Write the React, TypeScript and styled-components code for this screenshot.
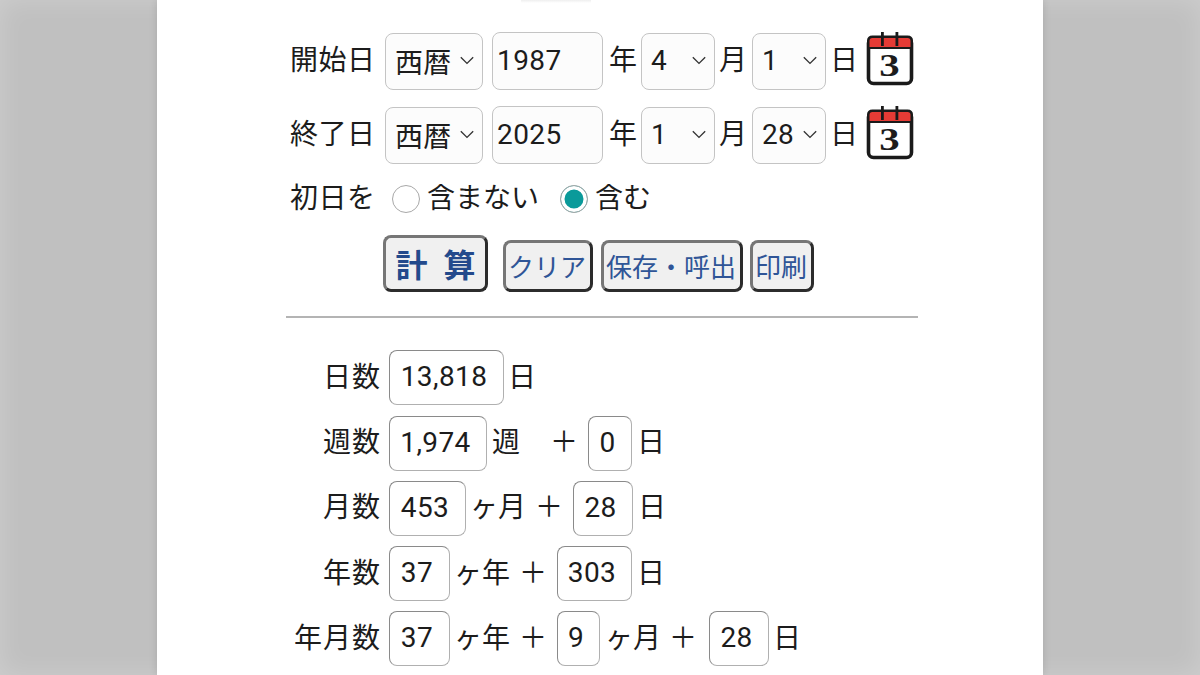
import React from "react";
import styled, { createGlobalStyle } from "styled-components";

const FONT = `Roboto, "Noto Sans CJK JP", sans-serif`;

const GlobalStyle = createGlobalStyle`
  html, body {
    margin: 0;
    padding: 0;
    background: #c0c0c0;
    overflow: hidden;
  }
  * {
    box-sizing: border-box;
  }
`;

function Chevron() {
  return (
    <ChevronIcon viewBox="0 0 14 8" aria-hidden="true">
      <path d="M1.5 1.2 L7 6.6 L12.5 1.2" fill="none" stroke="#333" strokeWidth="1.2" />
    </ChevronIcon>
  );
}

function CalendarIcon() {
  return (
    <CalendarSvg viewBox="0 0 48 54" aria-hidden="true">
      <rect x="2.5" y="6" width="43" height="45.5" rx="5" fill="#fff" stroke="#1a1a1a" strokeWidth="3.6" />
      <path d="M1 17 V9 Q1 3.5 6.5 3.5 H41.5 Q47 3.5 47 9 V17 Z" fill="#1a1a1a" />
      <path d="M3.5 15 V9 Q3.5 6 6.5 6 H41.5 Q44.5 6 44.5 9 V15 Z" fill="#e53b35" />
      <rect x="15" y="0" width="2.8" height="14" fill="#1a1a1a" />
      <rect x="29.5" y="0" width="2.8" height="14" fill="#1a1a1a" />
      <CalendarDigit transform="translate(23.5 44) scale(1.2 0.95)" textAnchor="middle">
        3
      </CalendarDigit>
    </CalendarSvg>
  );
}

type DateRowProps = {
  label: string;
  year: string;
  month: string;
  day: string;
};

function DateRow(props: DateRowProps) {
  const { label, year, month, day } = props;

  return (
    <FormRow>
      <RowLabel>{label}</RowLabel>
      <SelectBox $width={98} $after={9}>
        西暦
        <Chevron />
      </SelectBox>
      <YearInput>{year}</YearInput>
      <Unit $left={6} $right={4}>年</Unit>
      <SelectBox $width={74} $after={4}>
        {month}
        <Chevron />
      </SelectBox>
      <Unit $left={0} $right={5}>月</Unit>
      <SelectBox $width={74} $after={4}>
        {day}
        <Chevron />
      </SelectBox>
      <Unit $left={0} $right={8}>日</Unit>
      <CalendarIcon />
    </FormRow>
  );
}

export default function App() {
  return (
    <Page>
      <GlobalStyle />
      <Backdrop>
        <Panel>
          <TopEdge />
          <DateRow label="開始日" year="1987" month="4" day="1" />
          <DateRow label="終了日" year="2025" month="1" day="28" />
          <RadioRow>
            <RowLabel>初日を</RowLabel>
            <RadioDot />
            <RadioText>含まない</RadioText>
            <RadioDot $checked />
            <RadioText>含む</RadioText>
          </RadioRow>
          <ButtonRow>
            <MainButton>計 算</MainButton>
            <SubButton $width={90} $left={15}>クリア</SubButton>
            <SubButton $width={142} $left={8}>保存・呼出</SubButton>
            <SubButton $width={64} $left={7}>印刷</SubButton>
          </ButtonRow>
          <Divider />
          <Results>
            <ResultRow>
              <ResultLabel>日数</ResultLabel>
              <ValueBox $width={115}>13,818</ValueBox>
              <ResultText $left={4}>日</ResultText>
            </ResultRow>
            <ResultRow>
              <ResultLabel>週数</ResultLabel>
              <ValueBox $width={98}>1,974</ValueBox>
              <ResultText $left={5}>週</ResultText>
              <ResultText $left={30}>＋</ResultText>
              <ValueBox $width={44} $left={10}>0</ValueBox>
              <ResultText $left={5}>日</ResultText>
            </ResultRow>
            <ResultRow>
              <ResultLabel>月数</ResultLabel>
              <ValueBox $width={77}>453</ValueBox>
              <ResultText $left={4}>ヶ月</ResultText>
              <ResultText $left={9}>＋</ResultText>
              <ValueBox $width={60} $left={10}>28</ValueBox>
              <ResultText $left={5}>日</ResultText>
            </ResultRow>
            <ResultRow>
              <ResultLabel>年数</ResultLabel>
              <ValueBox $width={61}>37</ValueBox>
              <ResultText $left={4}>ヶ年</ResultText>
              <ResultText $left={9}>＋</ResultText>
              <ValueBox $width={75} $left={10}>303</ValueBox>
              <ResultText $left={5}>日</ResultText>
            </ResultRow>
            <ResultRow>
              <ResultLabel>年月数</ResultLabel>
              <ValueBox $width={61}>37</ValueBox>
              <ResultText $left={4}>ヶ年</ResultText>
              <ResultText $left={9}>＋</ResultText>
              <ValueBox $width={43} $left={10}>9</ValueBox>
              <ResultText $left={5}>ヶ月</ResultText>
              <ResultText $left={8}>＋</ResultText>
              <ValueBox $width={60} $left={12}>28</ValueBox>
              <ResultText $left={4}>日</ResultText>
            </ResultRow>
          </Results>
        </Panel>
      </Backdrop>
    </Page>
  );
}

const Page = styled.div`
  width: 1200px;
  height: 675px;
  overflow: hidden;
  font-family: ${FONT};
  color: #1c1c1c;
`;

const Backdrop = styled.div`
  height: 100%;
  display: flex;
  justify-content: center;
  background: #c0c0c0;
  box-shadow: inset 0 0 26px rgba(255, 255, 255, 0.22);
`;

const Panel = styled.main`
  width: 886px;
  height: 100%;
  padding-left: 129px;
  background: #fff;
  box-shadow: 0 0 8px rgba(0, 0, 0, 0.12);
`;

const TopEdge = styled.div`
  width: 70px;
  height: 3px;
  margin: 0 0 29px 235px;
  background: linear-gradient(#efefef, #fff);
`;

const FormRow = styled.div`
  display: flex;
  align-items: center;
  height: 58px;
  margin-bottom: 16px;
  margin-left: 4px;
`;

const RowLabel = styled.span`
  width: 95px;
  font-size: 28px;
  letter-spacing: 0.5px;
  line-height: 1;
  white-space: nowrap;
`;

const SelectBox = styled.div<{ $width: number; $after: number }>`
  display: flex;
  align-items: center;
  justify-content: space-between;
  width: ${(props) => props.$width}px;
  height: 57px;
  margin-right: ${(props) => props.$after}px;
  padding: 0 7px 1px 9px;
  font-size: 28px;
  letter-spacing: 0.2px;
  border: 1.5px solid #c4c4c4;
  border-radius: 8px;
  background: #fcfcfc;
`;

const ChevronIcon = styled.svg`
  width: 16px;
  height: 9px;
  flex: none;
`;

const YearInput = styled.div`
  display: flex;
  align-items: center;
  width: 111px;
  height: 58px;
  padding: 0 0 2px 4px;
  font-size: 28px;
  letter-spacing: 0.4px;
  border: 1.5px solid #c4c4c4;
  border-radius: 8px;
  background: #fcfcfc;
`;

const Unit = styled.span<{ $left: number; $right: number }>`
  margin-left: ${(props) => props.$left}px;
  margin-right: ${(props) => props.$right}px;
  font-size: 28px;
  line-height: 1;
`;

const CalendarSvg = styled.svg`
  width: 48px;
  height: 54px;
  flex: none;
  margin-top: -4px;
`;

const CalendarDigit = styled.text`
  font-family: "Liberation Serif", serif;
  font-size: 34px;
  font-weight: 700;
  fill: #1c1c1c;
`;

const RadioRow = styled.div`
  display: flex;
  align-items: center;
  height: 36px;
  margin-left: 4px;
  padding-top: 1px;
`;

const RadioDot = styled.span<{ $checked?: boolean }>`
  width: 28px;
  height: 28px;
  flex: none;
  margin: 0 7px 0 7px;
  border-radius: 50%;
  border: 1.5px solid #a8a8a8;
  background: ${(props) => (props.$checked ? "#0a9a9a" : "#fff")};
  box-shadow: ${(props) => (props.$checked ? "inset 0 0 0 3.5px #fff" : "none")};
`;

const RadioText = styled.span`
  margin-right: 14px;
  font-size: 28px;
  line-height: 1;
  white-space: nowrap;
`;

const ButtonRow = styled.div`
  display: flex;
  align-items: flex-end;
  height: 58px;
  margin-top: 18px;
  margin-left: 97px;
`;

const MainButton = styled.button`
  width: 105px;
  height: 57px;
  padding: 0 0 2px;
  font-family: ${FONT};
  font-size: 32px;
  font-weight: 700;
  word-spacing: 8px;
  color: #234a8c;
  background: #f0f0f0;
  border: 3px solid;
  border-color: #767676 #2c2c2c #2c2c2c #767676;
  border-radius: 8px;
`;

const SubButton = styled.button<{ $width: number; $left: number }>`
  width: ${(props) => props.$width}px;
  height: 52px;
  margin-left: ${(props) => props.$left}px;
  padding: 0 2px 2px 0;
  font-family: ${FONT};
  font-size: 26px;
  white-space: nowrap;
  color: #2f5597;
  background: #f0f0f0;
  border: 3px solid;
  border-color: #767676 #2c2c2c #2c2c2c #767676;
  border-radius: 8px;
`;

const Divider = styled.hr`
  width: 632px;
  height: 2px;
  margin: 24px 0 0 0;
  border: 0;
  background: #b4b4b4;
`;

const Results = styled.section`
  display: flex;
  flex-direction: column;
  gap: 10.25px;
  margin-top: 32.4px;
`;

const ResultRow = styled.div`
  display: flex;
  align-items: center;
  height: 55px;
`;

const ResultLabel = styled.span`
  width: 95px;
  margin-right: 8px;
  font-size: 28px;
  letter-spacing: 1px;
  line-height: 1;
  text-align: right;
  white-space: nowrap;
`;

const ValueBox = styled.div<{ $width: number; $left?: number }>`
  display: flex;
  align-items: center;
  justify-content: center;
  width: ${(props) => props.$width}px;
  height: 55px;
  margin-left: ${(props) => props.$left ?? 0}px;
  padding: 0 5px 2px 0;
  font-size: 28px;
  letter-spacing: 0.4px;
  border: 1.5px solid;
  border-color: #8a8a8a #b0b0b0 #b0b0b0 #8a8a8a;
  border-radius: 8px;
  background: #fff;
`;

const ResultText = styled.span<{ $left: number }>`
  margin-left: ${(props) => props.$left}px;
  font-size: 28px;
  line-height: 1;
  white-space: nowrap;
`;
